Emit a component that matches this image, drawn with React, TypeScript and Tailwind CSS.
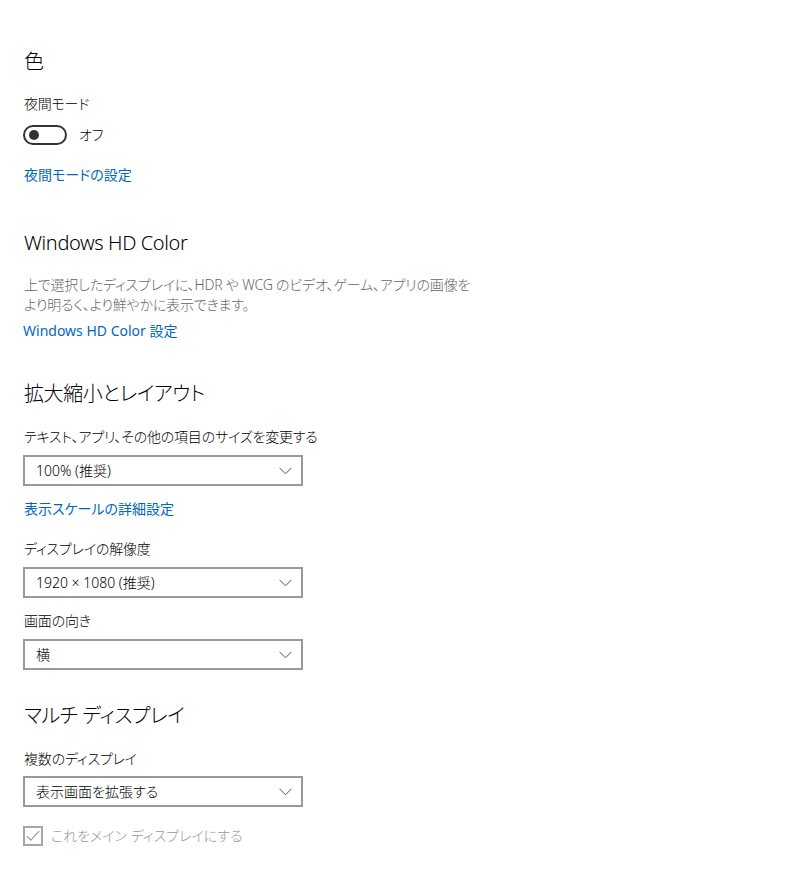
import React from 'react';

const font = "font-['Segoe_UI','Noto_Sans','Noto_Sans_CJK_JP',sans-serif] [font-feature-settings:'palt'] font-light";

const Chevron = () => (
    <svg width="13" height="8" viewBox="0 0 13 8" fill="none" className="mr-[9px]">
        <path d="M0.5 0.8 L6.5 6.8 L12.5 0.8" stroke="#555" strokeWidth="1" />
    </svg>
);

const Select = ({ value, className }: { value: string; className: string }) => (
    <div className={`${className} h-[31px] w-[280px] border-2 border-[#999] flex items-center justify-between pl-[11px]`}>
        <span className="text-[14px] leading-[20px] text-black">{value}</span>
        <Chevron />
    </div>
);

const Heading = ({ children, className }: { children: React.ReactNode; className: string }) => (
    <h2 className={`${className} text-[20px] leading-[28px] text-black tracking-[-0.4px]`}>{children}</h2>
);

const Label = ({ children, className }: { children: React.ReactNode; className: string }) => (
    <div className={`${className} text-[14px] leading-[20px] text-black tracking-[-0.2px]`}>{children}</div>
);

const Link = ({ children, className }: { children: React.ReactNode; className: string }) => (
    <a className={`${className} block text-[14px] leading-[20px] text-[#0067c0] font-normal`}>{children}</a>
);

export default function App() {
    return (
        <div className={`${font} min-h-screen bg-white pl-[23px] pt-[48px] pb-[24px]`}>
            <Heading className="ml-px">色</Heading>

            <Label className="mt-[18px] ml-px">夜間モード</Label>
            <div className="mt-[11px] flex items-center gap-[12px]">
                <div className="w-[44px] h-[20px] rounded-full border-2 border-[#333] flex items-center pl-[4px]">
                    <div className="w-[10px] h-[10px] rounded-full bg-[#333]" />
                </div>
                <span className="text-[14px] leading-[20px] text-black">オフ</span>
            </div>
            <Link className="mt-[20px] ml-px">夜間モードの設定</Link>

            <Heading className="mt-[44px] ml-px">Windows HD Color</Heading>
            <p className="mt-[18px] ml-px text-[14px] leading-[20px] text-[#666] whitespace-nowrap tracking-[-0.2px]">
                上で選択したディスプレイに、HDR や WCG のビデオ、ゲーム、アプリの画像を
                <br />
                より明るく、より鮮やかに表示できます。
            </p>
            <Link className="mt-[6px]">Windows HD Color 設定</Link>

            <Heading className="mt-[39px] ml-px">拡大縮小とレイアウト</Heading>
            <Label className="mt-[19px] ml-px">テキスト、アプリ、その他の項目のサイズを変更する</Label>
            <Select className="mt-[8px]" value="100% (推奨)" />
            <Link className="mt-[13px] ml-px">表示スケールの詳細設定</Link>

            <Label className="mt-[20px] ml-px">ディスプレイの解像度</Label>
            <Select className="mt-[8px]" value="1920 × 1080 (推奨)" />
            <Label className="mt-[13px] ml-px">画面の向き</Label>
            <Select className="mt-[8px]" value="横" />

            <Heading className="mt-[32px] ml-px">マルチ ディスプレイ</Heading>
            <Label className="mt-[19px] ml-px">複数のディスプレイ</Label>
            <Select className="mt-[7px]" value="表示画面を拡張する" />
            <div className="mt-[19px] flex items-center gap-[8px]">
                <div className="w-[20px] h-[20px] border-2 border-[#a6a6a6] flex items-center justify-center">
                    <svg width="14" height="12" viewBox="0 0 14 12" fill="none">
                        <path d="M0.8 6.2 L4.8 10.2 L13.2 1.2" stroke="#999" strokeWidth="1.2" />
                    </svg>
                </div>
                <span className="text-[14px] leading-[20px] text-[#999]">これをメイン ディスプレイにする</span>
            </div>
        </div>
    );
}
